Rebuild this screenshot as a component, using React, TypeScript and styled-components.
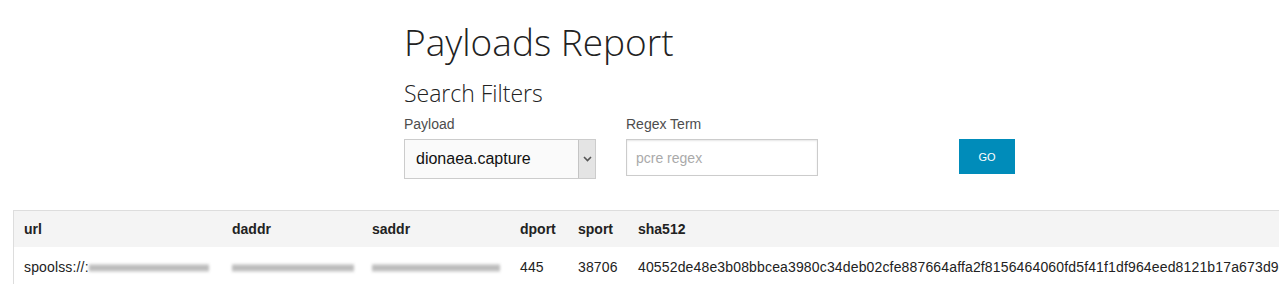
import React from 'react';
import styled, {createGlobalStyle} from 'styled-components';

const GlobalStyle = createGlobalStyle`
  html, body {
    margin: 0;
    padding: 0;
    background: #fff;
    overflow: hidden;
  }
  body {
    font-family: "Liberation Sans", Arial, sans-serif;
    color: #222;
  }
`;

type Row = {
  url: string;
  urlBlur: number;
  daddrBlur: number;
  saddrBlur: number;
  dport: string;
  sport: string;
  sha512: string;
};

const rows: Row[] = [
  {
    url: 'spoolss://:',
    urlBlur: 120,
    daddrBlur: 122,
    saddrBlur: 128,
    dport: '445',
    sport: '38706',
    sha512:
      '40552de48e3b08bbcea3980c34deb02cfe887664affa2f8156464060fd5f41f1df964eed8121b17a673d9c2b3e1f0a7d6c5b4a39281706f5e4d3c2b1a0',
  },
];

const columns = ['url', 'daddr', 'saddr', 'dport', 'sport', 'sha512'];
const colWidths = [208, 140, 148, 58, 60, 1200];

export default function App() {
  return (
    <Page>
      <GlobalStyle />
      <Header>
        <Title>Payloads Report</Title>
        <SubTitle>Search Filters</SubTitle>
        <Filters>
          <Field>
            <Label>Payload</Label>
            <SelectBox>
              <SelectValue>dionaea.capture</SelectValue>
              <SelectArrow>
                <svg width="9" height="6" viewBox="0 0 9 6">
                  <path d="M1 1l3.5 3.5L8 1" fill="none" stroke="#555" strokeWidth="1.6" />
                </svg>
              </SelectArrow>
            </SelectBox>
          </Field>
          <Field>
            <Label>Regex Term</Label>
            <TextInput placeholder="pcre regex" />
          </Field>
          <ButtonCell>
            <GoButton>GO</GoButton>
          </ButtonCell>
        </Filters>
      </Header>

      <TableWrap>
        <Table>
          <colgroup>
            {colWidths.map((w, i) => (
              <col key={i} style={{width: w}} />
            ))}
          </colgroup>
          <thead>
            <tr>
              {columns.map((c) => (
                <Th key={c}>{c}</Th>
              ))}
            </tr>
          </thead>
          <tbody>
            {rows.map((r, i) => (
              <tr key={i}>
                <Td>
                  {r.url}
                  <Blurred style={{width: r.urlBlur}} />
                </Td>
                <Td>
                  <Blurred style={{width: r.daddrBlur}} />
                </Td>
                <Td>
                  <Blurred style={{width: r.saddrBlur}} />
                </Td>
                <Td>{r.dport}</Td>
                <Td>{r.sport}</Td>
                <Td>{r.sha512}</Td>
              </tr>
            ))}
          </tbody>
        </Table>
      </TableWrap>
    </Page>
  );
}

const Page = styled.div`
  width: 1279px;
  height: 284px;
  overflow: hidden;
`;

const Header = styled.div`
  padding: 17px 0 0 404px;
`;

const Title = styled.h1`
  margin: 0;
  font-family: "Open Sans", sans-serif;
  font-weight: 300;
  font-size: 37px;
  line-height: 50px;
  color: #222;
`;

const SubTitle = styled.h4`
  margin: 11px 0 0;
  font-family: "Open Sans", sans-serif;
  font-weight: 300;
  font-size: 23px;
  line-height: 30px;
  color: #222;
`;

const Filters = styled.div`
  display: flex;
  align-items: flex-start;
  margin-top: 6px;
`;

const Field = styled.div`
  display: flex;
  flex-direction: column;
  width: 222px;
`;

const Label = styled.label`
  font-size: 14px;
  line-height: 20px;
  color: #4d4d4d;
  margin-bottom: 5px;
`;

const SelectBox = styled.div`
  display: flex;
  width: 192px;
  height: 40px;
  box-sizing: border-box;
  border: 1px solid #cccccc;
  background: #fafafa;
`;

const SelectValue = styled.div`
  flex: 1;
  display: flex;
  align-items: center;
  padding-left: 11px;
  font-size: 16px;
  color: #111;
`;

const SelectArrow = styled.div`
  width: 16px;
  display: flex;
  align-items: center;
  justify-content: center;
  background: #e4e4e4;
  border-left: 1px solid #c4c4c4;
`;

const TextInput = styled.input`
  width: 192px;
  height: 37px;
  box-sizing: border-box;
  border: 1px solid #cccccc;
  box-shadow: inset 0 1px 2px rgba(0, 0, 0, 0.1);
  padding: 0 9px;
  font-family: "Liberation Sans", Arial, sans-serif;
  font-size: 14px;
  color: #333;
  outline: none;

  &::placeholder {
    color: #aaa;
  }
`;

const ButtonCell = styled.div`
  padding: 25px 0 0 111px;
`;

const GoButton = styled.button`
  width: 56px;
  height: 35px;
  border: none;
  background: #008cba;
  color: #fff;
  font-family: "Liberation Sans", Arial, sans-serif;
  font-size: 11px;
  padding: 0;
`;

const TableWrap = styled.div`
  margin: 31px 0 0 13px;
  border: 1px solid #dddddd;
  border-right: none;
  width: 2000px;
`;

const Table = styled.table`
  border-collapse: collapse;
  table-layout: fixed;
  width: 1814px;
`;

const Th = styled.th`
  text-align: left;
  background: #f4f4f4;
  font-size: 14px;
  font-weight: bold;
  color: #222;
  height: 36px;
  padding: 0 10px;
`;

const Td = styled.td`
  font-size: 14px;
  letter-spacing: 0.15px;
  color: #222;
  height: 40px;
  padding: 0 10px 2px;
  white-space: nowrap;
  overflow: hidden;
`;

const Blurred = styled.span`
  display: inline-block;
  vertical-align: middle;
  height: 8px;
  background: linear-gradient(#d2d2d2, #a9a9a9 50%, #d8d8d8);
  filter: blur(1.5px);
  opacity: 0.9;
`;
